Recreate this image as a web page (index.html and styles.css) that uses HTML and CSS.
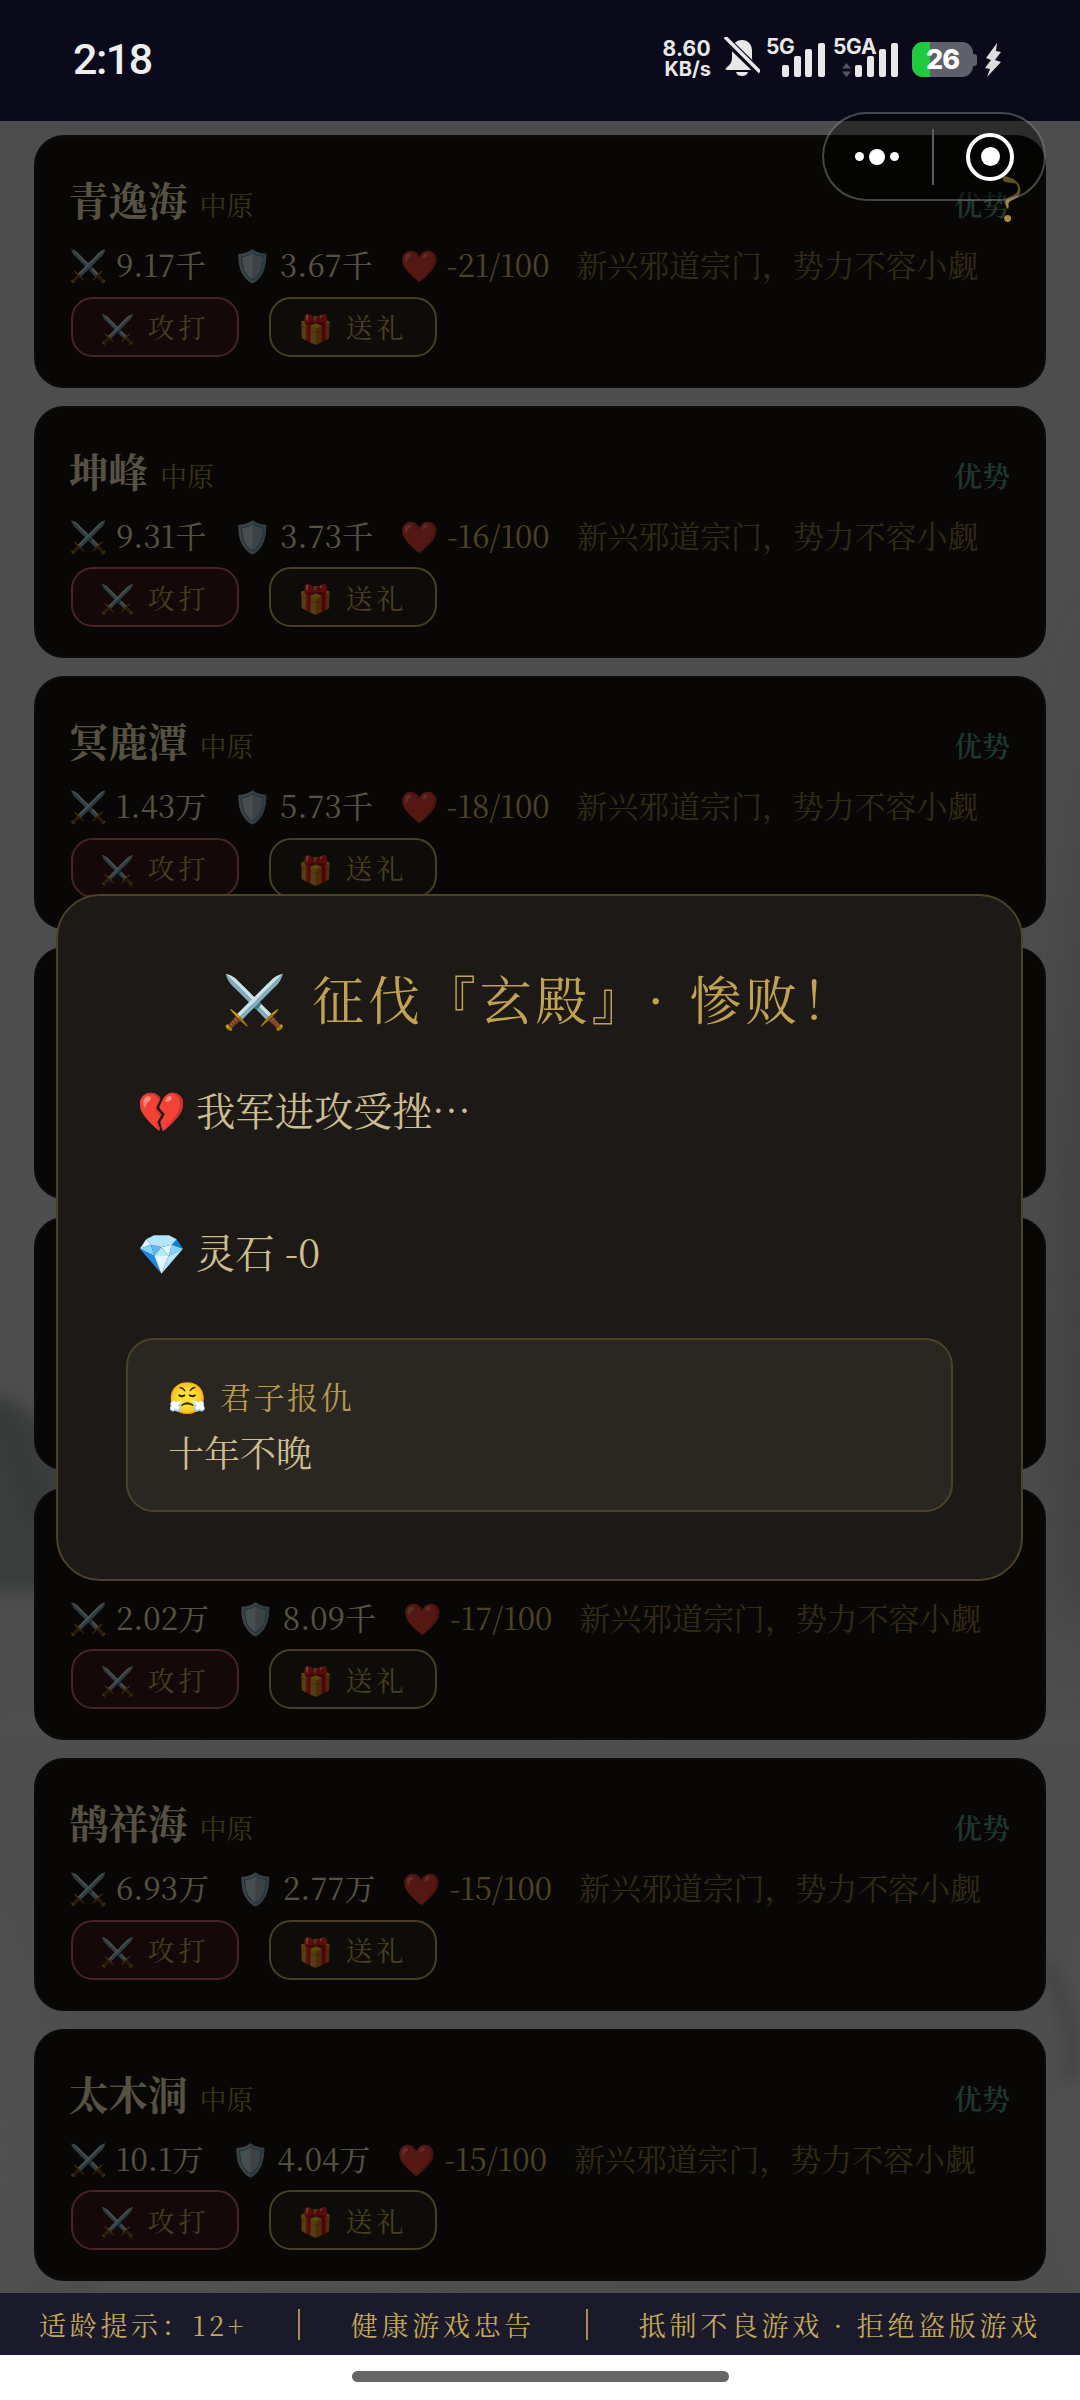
FILE: index.html
```html
<!DOCTYPE html>
<html lang="zh">
<head>
<meta charset="utf-8">
<title>征伐</title>
<link rel="stylesheet" href="styles.css">
</head>
<body>
<div class="screen">
  <header class="status">
    <span class="time">2:18</span>
    <div class="status-icons">
      <div class="speed"><span>8.60</span><span class="unit">KB/s</span></div>
      <svg class="bell" viewBox="0 0 36 40" width="36" height="40">
        <path d="M18 3c-6 0-10 4-10 11v7c0 4-2 7-6 10-1 1 0 2 1 2h30c1 0 2-1 1-2-4-3-6-6-6-10v-7c0-7-4-11-10-11z" fill="#e8e8e8"/>
        <path d="M12 35h12c-1 3-3 4-6 4s-5-1-6-4z" fill="#e8e8e8"/>
        <path d="M0 1l36 35" stroke="#0a0a1a" stroke-width="8"/>
        <path d="M1 0l35 35" stroke="#e8e8e8" stroke-width="3.500"/>
      </svg>
      <div class="signal s5g">
        <span class="net">5G</span>
        <svg viewBox="0 0 43 34" width="43" height="34"><g fill="#e8e8e8"><rect x="0" y="22" width="7" height="12" rx="2"/><rect x="12" y="13" width="7" height="21" rx="2"/><rect x="23" y="6" width="7" height="28" rx="2"/><rect x="36" y="0" width="7" height="34" rx="2"/></g></svg>
      </div>
      <div class="signal s5ga">
        <span class="net">5GA</span>
        <svg class="arrows" viewBox="0 0 9 14" width="9" height="14"><path d="M4.500 0L9 5.500H0zM4.500 14L0 8.500h9z" fill="#565663"/></svg>
        <svg viewBox="0 0 43 34" width="43" height="34"><g fill="#e8e8e8"><rect x="0" y="22" width="7" height="12" rx="2"/><rect x="12" y="13" width="7" height="21" rx="2"/><rect x="24" y="6" width="7" height="28" rx="2"/><rect x="36" y="0" width="7" height="34" rx="2"/></g></svg>
      </div>
      <div class="battery"><i class="charge"></i><b>26</b><i class="tip"></i></div>
      <svg class="bolt" viewBox="0 0 16 34" width="16" height="34"><path d="M12 0L1 15l5 2-6 8 5 1-3 8 14-15-6-2 6-8-5-1z" fill="#dcdcdc"/></svg>
    </div>
  </header>

  <main class="stage">
    <svg class="ink" viewBox="0 0 1080 2172" preserveAspectRatio="none" aria-hidden="true">
      <defs><filter id="soft"><feGaussianBlur stdDeviation="8"/></filter><filter id="softer"><feGaussianBlur stdDeviation="34"/></filter></defs>
      <g filter="url(#softer)">
        <path d="M1140 500C1060 800 1050 1100 1060 1500L1140 1500z" fill="#b4b4b4"/>
        <path d="M-60 1720C40 1800 60 2000 30 2180L-60 2180z" fill="#e8e8e8"/>
        <path d="M1140 1700C1060 1800 1050 2000 1070 2180L1140 2180z" fill="#e8e8e8"/>
      </g>
      <g filter="url(#soft)">
        <path d="M-20 1276C30 1270 60 1310 90 1420L90 1470-20 1470z" fill="#a6aeac"/>
        <path d="M0 1290C20 1330 30 1370 40 1400" fill="none" stroke="#7f8886" stroke-width="6"/>
        <path d="M0 1604C300 1620 760 1590 1080 1610" fill="none" stroke="#f2f2f2" stroke-width="10"/>
        <path d="M100 2166C300 2150 500 2160 620 2146" fill="none" stroke="#fafafa" stroke-width="8"/>
        <path d="M1046 1840C1060 1880 1080 1900 1070 1960" fill="none" stroke="#b8b8b8" stroke-width="12"/>
      </g>
    </svg>

    <div class="list">
      <article class="card">
        <div class="head"><div class="who"><span class="name">青逸海</span><span class="region">中原</span></div><span class="trend">优势</span></div>
        <div class="stats"><span class="stat">⚔️ 9.17千</span><span class="stat">🛡️ 3.67千</span><span class="stat rel">❤️ <em>-21/100</em></span><span class="desc">新兴邪道宗门，势力不容小觑</span></div>
        <div class="actions"><button class="btn attack"><span class="ico">⚔️</span>攻打</button><button class="btn gift"><span class="ico">🎁</span>送礼</button></div>
      </article>
      <article class="card">
        <div class="head"><div class="who"><span class="name">坤峰</span><span class="region">中原</span></div><span class="trend">优势</span></div>
        <div class="stats"><span class="stat">⚔️ 9.31千</span><span class="stat">🛡️ 3.73千</span><span class="stat rel">❤️ <em>-16/100</em></span><span class="desc">新兴邪道宗门，势力不容小觑</span></div>
        <div class="actions"><button class="btn attack"><span class="ico">⚔️</span>攻打</button><button class="btn gift"><span class="ico">🎁</span>送礼</button></div>
      </article>
      <article class="card">
        <div class="head"><div class="who"><span class="name">冥鹿潭</span><span class="region">中原</span></div><span class="trend">优势</span></div>
        <div class="stats"><span class="stat">⚔️ 1.43万</span><span class="stat">🛡️ 5.73千</span><span class="stat rel">❤️ <em>-18/100</em></span><span class="desc">新兴邪道宗门，势力不容小觑</span></div>
        <div class="actions"><button class="btn attack"><span class="ico">⚔️</span>攻打</button><button class="btn gift"><span class="ico">🎁</span>送礼</button></div>
      </article>
      <article class="card"></article>
      <article class="card"></article>
      <article class="card">
        <div class="head"></div>
        <div class="stats"><span class="stat">⚔️ 2.02万</span><span class="stat">🛡️ 8.09千</span><span class="stat rel">❤️ <em>-17/100</em></span><span class="desc">新兴邪道宗门，势力不容小觑</span></div>
        <div class="actions"><button class="btn attack"><span class="ico">⚔️</span>攻打</button><button class="btn gift"><span class="ico">🎁</span>送礼</button></div>
      </article>
      <article class="card">
        <div class="head"><div class="who"><span class="name">鹄祥海</span><span class="region">中原</span></div><span class="trend">优势</span></div>
        <div class="stats"><span class="stat">⚔️ 6.93万</span><span class="stat">🛡️ 2.77万</span><span class="stat rel">❤️ <em>-15/100</em></span><span class="desc">新兴邪道宗门，势力不容小觑</span></div>
        <div class="actions"><button class="btn attack"><span class="ico">⚔️</span>攻打</button><button class="btn gift"><span class="ico">🎁</span>送礼</button></div>
      </article>
      <article class="card">
        <div class="head"><div class="who"><span class="name">太木洞</span><span class="region">中原</span></div><span class="trend">优势</span></div>
        <div class="stats"><span class="stat">⚔️ 10.1万</span><span class="stat">🛡️ 4.04万</span><span class="stat rel">❤️ <em>-15/100</em></span><span class="desc">新兴邪道宗门，势力不容小觑</span></div>
        <div class="actions"><button class="btn attack"><span class="ico">⚔️</span>攻打</button><button class="btn gift"><span class="ico">🎁</span>送礼</button></div>
      </article>
    </div>

    <div class="mask"></div>
    <span class="help">?</span>

    <section class="modal">
      <h2 class="modal-title">⚔️ 征伐『玄殿』· 惨败！</h2>
      <p class="modal-body">💔 我军进攻受挫…<br><br>💎 灵石 -0</p>
      <div class="quote">
        <div class="quote-head">😤 君子报仇</div>
        <div class="quote-text">十年不晚</div>
      </div>
    </section>
  </main>

  <div class="capsule">
    <span class="dots"><i></i><i class="big"></i><i></i></span>
    <span class="divider"></span>
    <span class="target"><i></i></span>
  </div>

  <footer class="notice">
    <span>适龄提示：12+</span><i></i><span>健康游戏忠告</span><i></i><span>抵制不良游戏 · 拒绝盗版游戏</span>
  </footer>
  <div class="home"><span></span></div>
</div>
</body>
</html>
```
FILE: styles.css
```css
*{box-sizing:border-box}
html,body{margin:0;padding:0}
body{width:1080px;height:2400px;overflow:hidden;background:#fff;font-family:"Noto Serif CJK SC","Noto Sans CJK SC",serif}
.screen{position:relative;width:1080px;height:2400px;display:flex;flex-direction:column}

.status{height:121px;background:#0a0a1a;display:flex;align-items:center;justify-content:space-between;padding:0 79px 3px 73px;flex:none}
.time{font-family:Roboto,sans-serif;font-weight:500;font-size:43px;color:#eee;letter-spacing:-1.500px}
.status-icons{display:flex;align-items:flex-end;height:40px;margin-top:-4px}
.speed{display:flex;flex-direction:column;align-items:flex-end;width:48px;margin-top:-1px;font-family:Inter,sans-serif;font-weight:700;font-size:21px;line-height:24px;color:#e8e8e8;letter-spacing:.3px}
.speed .unit{font-size:20px;letter-spacing:0;line-height:16px}
.bell{margin-left:13px}
.signal{position:relative;height:38px;display:flex;align-items:flex-end;justify-content:flex-end}
.s5g{width:59px;margin-left:6px}
.s5ga{width:65px;margin-left:8px}
.net{position:absolute;left:0;top:-2px;font-family:Inter,sans-serif;font-weight:700;font-size:21px;line-height:20px;color:#e8e8e8;letter-spacing:-.3px}
.arrows{position:absolute;left:9px;bottom:0}
.battery{position:relative;width:61px;height:35px;margin-left:14px;background:#60606c;border-radius:11px;display:flex;align-items:center;justify-content:center}
.charge{position:absolute;left:0;top:0;bottom:0;width:18px;background:#21c93f;border-radius:11px 0 0 11px}
.battery b{position:relative;font-family:Inter,sans-serif;font-weight:800;font-size:27px;color:#fff;letter-spacing:-1px}
.tip{position:absolute;right:-4px;top:12px;width:4px;height:12px;background:#60606c;border-radius:0 3px 3px 0}
.bolt{margin-left:12px}

.stage{position:relative;flex:1;min-height:0;background:#dcdcdc;overflow:hidden}
.ink{position:absolute;inset:0;width:100%;height:100%}
.list{position:relative;display:flex;flex-direction:column;gap:18px;padding:14px 34px 0}
.card{height:252.500px;background:#171410;border:2px solid #24211a;border-radius:30px;padding:30px 34px 0 33px;display:flex;flex-direction:column}
.head{height:64px;display:flex;justify-content:space-between;align-items:center}
.who{display:flex;align-items:baseline;gap:12px}
.name{font-size:39.500px;font-weight:700;color:#f6e9bc;line-height:56px}
.region{font-size:27px;color:#ab9244}
.trend{font-size:28px;font-weight:600;color:#579f8e;margin-top:10px}
.stats{display:flex;align-items:center;height:44px;margin-top:10.500px;font-size:31px;white-space:nowrap;color:#f6e9bc}
.stat{margin-right:27px}
.rel em{font-style:normal;color:#dcbd6a}
.desc{color:#8f793e;letter-spacing:-.1px}
.actions{display:flex;gap:30px;margin:11px 0 0 1.500px}
.btn{width:168px;height:60px;border:2px solid;border-radius:22px;font:inherit;font-size:27px;letter-spacing:4px;display:flex;align-items:center;justify-content:center;gap:13px;color:#cdaf60;padding:0}
.btn .ico{letter-spacing:0;font-size:28px}
.attack{background:#3c1717;border-color:#c96468}
.gift{background:#292317;border-color:#cfb364}

.mask{position:absolute;inset:0;background:rgba(0,0,0,.65)}
.help{position:absolute;left:998px;top:39px;font-size:60px;line-height:70px;color:#a68b44}

.modal{position:absolute;left:56px;top:773px;width:967px;height:687px;background:#1c1916;border:2px solid #4d4228;border-radius:44px;padding:60px 68px 0}
.modal-title{margin:0;font-weight:400;font-size:51.840px;line-height:84px;letter-spacing:4px;word-spacing:4px;text-spacing-trim:space-all;color:#c0a252;text-align:center}
.modal-body{margin:34px 0 0 11px;font-size:39.300px;line-height:71px;color:#cdbd8f}
.quote{margin-top:51px;height:174px;background:#2a2621;border:2px solid #4d4228;border-radius:28px;padding:33px 40px 0}
.quote-head{font-size:31px;line-height:46px;letter-spacing:2.500px;color:#b59a4d}
.quote-text{font-size:36px;line-height:56px;margin-top:5px;color:#cdbd8f}

.capsule{position:absolute;left:822px;top:112px;width:224px;height:89px;border-radius:45px;border:2.500px solid rgba(255,255,255,.26);background:rgba(0,0,0,.42);display:flex;align-items:center}
.dots{display:flex;align-items:center;gap:5px;margin-left:31px;width:77px}
.dots i{width:9px;height:9px;border-radius:50%;background:#fff}
.dots .big{width:16px;height:16px}
.divider{width:2px;height:56px;background:#5d5d5d}
.target{width:48px;height:48px;margin-left:32px;border-radius:50%;border:4px solid #fff;display:flex;align-items:center;justify-content:center}
.target i{width:19px;height:19px;border-radius:50%;background:#fff}

.notice{height:62px;flex:none;background:#1a1a2a;display:flex;align-items:center;justify-content:space-between;padding:0 39px;color:#c4a85a;font-size:27px;letter-spacing:3.700px;white-space:nowrap}
.notice i{width:1.500px;height:31px;background:#a68f4e}
.home{height:45px;flex:none;background:#fff;padding-top:16px;display:flex;justify-content:center}
.home span{width:377px;height:11px;border-radius:6px;background:#666}
```
